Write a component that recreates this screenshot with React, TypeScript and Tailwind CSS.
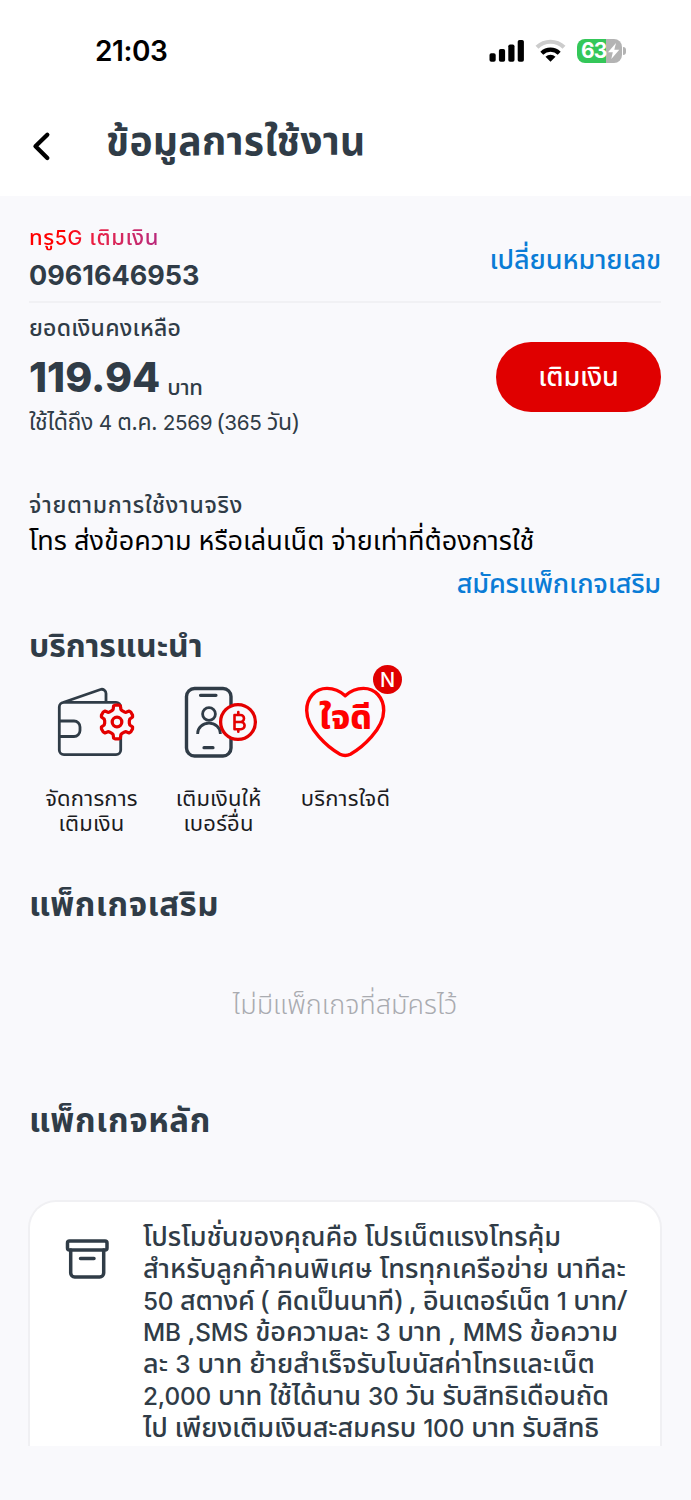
const services = [
    { id: 1, icon: <WalletIcon />, lines: ["จัดการการ", "เติมเงิน"] },
    { id: 2, icon: <TopUpIcon />, lines: ["เติมเงินให้", "เบอร์อื่น"] },
    { id: 3, icon: <HeartIcon />, lines: ["บริการใจดี"], isNew: true },
]

const promotion = [
    { text: "โปรโมชั่นของคุณคือ โปรเน็ตแรงโทรคุ้ม", tracking: "-tracking-[0.05px]" },
    { text: "สำหรับลูกค้าคนพิเศษ โทรทุกเครือข่าย นาทีละ", tracking: "tracking-[0.07px]" },
    { text: "50 สตางค์ ( คิดเป็นนาที) , อินเตอร์เน็ต 1 บาท/", tracking: "-tracking-[0.25px]" },
    { text: "MB ,SMS ข้อความละ 3 บาท , MMS ข้อความ", tracking: "-tracking-[0.1px]" },
    { text: "ละ 3 บาท ย้ายสำเร็จรับโบนัสค่าโทรและเน็ต", tracking: "tracking-[0.07px]" },
    { text: "2,000 บาท ใช้ได้นาน 30 วัน รับสิทธิเดือนถัด", tracking: "-tracking-[0.12px]" },
    { text: "ไป เพียงเติมเงินสะสมครบ 100 บาท รับสิทธิ", tracking: "-tracking-[0.1px]" },
]

// latin letters and digits sit a bit smaller than the Thai around them
function Mixed({ text }: { text: string }) {
    return (
        <>
            {text.split(/([A-Za-z0-9][A-Za-z0-9,]*)/).map((part, i) =>
                i % 2 ? <span key={i} className="font-[Inter,sans-serif] text-[0.9em]">{part}</span> : part
            )}
        </>
    )
}

// six-toothed gear around (cx, cy)
function gearPath(cx: number, cy: number) {
    const pts: string[] = []
    for (let i = 0; i < 6; i++) {
        const mid = -90 + i * 60
        for (const [offset, r] of [[-24, 12.4], [-17, 13.2], [-12, 16.4], [-6, 17], [6, 17], [12, 16.4], [17, 13.2], [24, 12.4]]) {
            const a = ((mid + offset) * Math.PI) / 180
            pts.push(`${(cx + r * Math.cos(a)).toFixed(2)} ${(cy + r * Math.sin(a)).toFixed(2)}`)
        }
    }
    return `M${pts.join("L")}Z`
}

function WalletIcon() {
    return (
        <svg width="127" height="96" viewBox="0 0 127 96" fill="none" strokeLinecap="round" strokeLinejoin="round">
            <path d="M78 38.300H36a4.700 4.700 0 0 0-4.700 4.700v43a4.700 4.700 0 0 0 4.700 4.700h52a4.700 4.700 0 0 0 4.700-4.700V43a4.700 4.700 0 0 0-4.700-4.700H78V29.500a4.200 4.200 0 0 0-5.500-4L35 38.500M31.300 57H46a6 6 0 0 1 6 6v3.500a6 6 0 0 1-6 6H31.300" stroke="#303c47" strokeWidth="2.800" />
            <path d={gearPath(89, 58)} fill="#f9f9fc" />
            <path d={gearPath(89, 58)} stroke="#e30000" strokeWidth="3.200" />
            <circle cx="89" cy="58" r="4.800" stroke="#e30000" strokeWidth="3.300" />
        </svg>
    )
}

function TopUpIcon() {
    return (
        <svg width="127" height="96" viewBox="0 0 127 96" fill="none" strokeLinecap="round">
            <rect x="31.500" y="24.500" width="44.500" height="67.500" rx="8" stroke="#303c47" strokeWidth="3.400" />
            <path d="M45.500 31.300H61M49 83.700h9" stroke="#303c47" strokeWidth="3.200" />
            <circle cx="54" cy="50" r="6.400" stroke="#303c47" strokeWidth="2.800" />
            <path d="M42.700 70v-.8a11.300 10 0 0 1 22.600 0v.8" stroke="#303c47" strokeWidth="2.800" strokeLinecap="butt" />
            <circle cx="83" cy="58" r="17.400" fill="#f9f9fc" stroke="#e30000" strokeWidth="3.300" />
            <path d="M79.500 51h6a3.400 3.400 0 0 1 0 7h-6zM79.500 58h6.500a3.500 3.500 0 0 1 0 7.200h-6.500zM83.300 48v3M83.300 65.200v2.600" stroke="#e30000" strokeWidth="2.600" strokeLinejoin="round" />
        </svg>
    )
}

function HeartIcon() {
    return (
        <svg width="127" height="96" viewBox="0 0 127 96" fill="none">
            <path d="M63.200 31.800C58 27 51.500 24.400 45 24.400C33 24.400 24.700 34 24.700 46.500C24.700 65 46.500 84 58 90.200Q63.200 92.800 68.400 90.200C79.900 84 101.700 65 101.700 46.500C101.700 34 93.400 24.400 81.400 24.400C74.900 24.400 68.400 27 63.200 31.800Z" stroke="#ff0000" strokeWidth="3.400" strokeLinejoin="round" />
        </svg>
    )
}

function StatusIcons() {
    return (
        <div className="flex items-center">
            <svg width="88" height="30" viewBox="0 0 88 30" fill="none">
                <rect x=".5" y="17.300" width="6.200" height="8.400" rx="1.800" fill="#000" />
                <rect x="9.900" y="13" width="6.200" height="12.700" rx="1.800" fill="#000" />
                <rect x="19.300" y="8.500" width="6.200" height="17.200" rx="1.800" fill="#000" />
                <rect x="28.700" y="4" width="6.200" height="21.700" rx="1.800" fill="#000" />
                <path d="M48 11.200a19.500 19.500 0 0 1 27 0" stroke="#ccc" strokeWidth="4.200" />
                <path d="M52.800 17.200a12.500 12.500 0 0 1 17.400 0" stroke="#000" strokeWidth="4.200" />
                <path d="M61.500 25.700l-5-5a7.400 7.400 0 0 1 10 0z" fill="#000" />
            </svg>
            <div className="flex h-6 w-[45px] items-center rounded-lg bg-linear-to-r from-[#34c759] from-64% to-[#b3b3b3] to-64% pl-1 text-white">
                <span className="font-[Inter,sans-serif] text-[21px] leading-6 font-bold -tracking-[0.8px]">63</span>
                <svg width="13" height="18" viewBox="0 0 13 18">
                    <path d="M9 1L1 10.300H5.800L4.300 17L12.300 7.700H7.300z" fill="currentColor" />
                </svg>
            </div>
            <div className="ml-px h-2 w-[3px] rounded-r-full bg-[#b3b3b3]" />
        </div>
    )
}

export default function App() {
    return (
        <div className="flex h-[1500px] w-[691px] flex-col overflow-hidden bg-[#f9f9fc] font-['Noto_Sans_Thai','Noto_Sans',sans-serif] whitespace-nowrap text-[#303c47]">
            <div className="flex h-[102px] shrink-0 items-center justify-between bg-white pr-[65px] pl-[95px]">
                <span className="font-[Inter,sans-serif] text-[28px] font-semibold -tracking-[0.4px] text-black">21:03</span>
                <StatusIcons />
            </div>
            <div className="flex h-[94px] shrink-0 items-start bg-white pl-[30px]">
                <svg width="24" height="32" viewBox="0 0 24 32" className="mt-7">
                    <path d="M17.300 4.800L5.500 16.300L17.300 28" fill="none" stroke="#000" strokeWidth="4.300" strokeLinecap="round" strokeLinejoin="round" />
                </svg>
                <h1 className="ml-[52px] mt-[17px] text-[39px] leading-[50px] font-bold tracking-[0.3px]">ข้อมูลการใช้งาน</h1>
            </div>

            <main className="flex h-[1250px] shrink-0 flex-col overflow-hidden pr-[30px] pl-[29px]">
                <div className="flex items-center justify-between border-b-2 border-[#f1f1f4] pt-6 pb-1">
                    <div>
                        <p className="h-[34px] text-[22px] leading-[36px] font-medium tracking-[0.6px]">
                            <span className="bg-linear-to-r from-[#ff0000] from-30% to-[#b8297c] bg-clip-text text-transparent"><Mixed text="ทรู5G เติมเงิน" /></span>
                        </p>
                        <p className="h-[43px] font-[Inter,sans-serif] text-[27px] leading-[44px] font-bold">0961646953</p>
                    </div>
                    <a className="mt-1.5 text-[27px] font-medium -tracking-[0.1px] text-[#0a7cd6]">เปลี่ยนหมายเลข</a>
                </div>

                <div className="flex items-start justify-between pt-[9px]">
                    <div>
                        <p className="h-8 text-[23px] leading-[34px] font-medium tracking-[0.25px]">ยอดเงินคงเหลือ</p>
                        <p className="flex h-[66px] items-start gap-2">
                            <span className="font-[Inter,sans-serif] text-[41px] leading-[66px] font-extrabold">119.94</span>
                            <span className="mt-3 -ml-px text-[22px] leading-[66px] font-medium -tracking-[0.3px]">บาท</span>
                        </p>
                        <p className="h-6 text-[23px] leading-[26px] -tracking-[0.35px]"><Mixed text="ใช้ได้ถึง 4 ต.ค. 2569 (365 วัน)" /></p>
                    </div>
                    <button className="mt-[30px] h-[70px] w-[165px] rounded-full bg-[#e00000] pt-0.5 text-[27px] font-medium -tracking-[0.1px] text-white">เติมเงิน</button>
                </div>

                <div className="flex flex-col pt-[56px]">
                    <p className="h-8 text-[23px] leading-[33px] font-medium tracking-[0.72px]">จ่ายตามการใช้งานจริง</p>
                    <p className="h-[42px] text-[27px] leading-10 text-black">โทร ส่งข้อความ หรือเล่นเน็ต จ่ายเท่าที่ต้องการใช้</p>
                    <a className="h-11 self-end text-[27px] leading-[42px] font-medium -tracking-[0.2px] text-[#0a7cd6]">สมัครแพ็กเกจเสริม</a>
                </div>

                <h2 className="mt-[18px] h-[42px] text-[32px] leading-[43px] font-bold -tracking-[0.1px]">บริการแนะนำ</h2>
                <div className="-ml-px -mt-1 flex">
                    {services.map((service) => (
                        <div key={service.id} className="relative w-[127px] text-center">
                            {service.icon}
                            {service.isNew && (
                                <>
                                    <span className="absolute inset-x-0 top-[35px] text-[34px] leading-10 font-extrabold text-[#ff0000]">ใจดี</span>
                                    <span className="absolute top-px left-[91px] flex size-[29px] items-center justify-center rounded-full bg-[#e00000] font-[Inter,sans-serif] text-xl font-medium text-white">N</span>
                                </>
                            )}
                            <div className="mt-[27px] text-[22px] leading-[25px] tracking-[0.2px] text-[#1c1c1f]">
                                {service.lines.map((line) => (
                                    <p key={line}>{line}</p>
                                ))}
                            </div>
                        </div>
                    ))}
                </div>

                <h2 className="mt-[48px] h-[42px] text-[33px] leading-[42px] font-bold tracking-[0.5px]">แพ็กเกจเสริม</h2>
                <p className="mt-[57px] h-[42px] text-center text-[27px] leading-[44px] font-light text-[#a9abb0]">ไม่มีแพ็กเกจที่สมัครไว้</p>
                <h2 className="mt-[74px] h-[42px] text-[33px] leading-[44px] font-bold tracking-[0.6px]">แพ็กเกจหลัก</h2>

                <div className="-mx-px mt-[58px] flex items-start rounded-t-[28px] border-2 border-b-0 border-[#f0f0f3] bg-white pt-[19px] pb-20">
                    <svg width="48" height="44" viewBox="0 0 48 44" fill="none" stroke="#303c47" strokeWidth="3.500" strokeLinejoin="round" strokeLinecap="round" className="mt-4 ml-[33px]">
                        <rect x="4.500" y="4" width="39.500" height="9" rx="2" />
                        <path d="M7.700 13v23a4 4 0 0 0 4 4h25a4 4 0 0 0 4-4V13M17.500 21.500h13.500" />
                    </svg>
                    <div className="mt-px ml-[32px] text-[27px] leading-[31.8px] font-medium">
                        {promotion.map((line) => (
                            <p key={line.text} className={`h-[31.8px] ${line.tracking}`}><Mixed text={line.text} /></p>
                        ))}
                    </div>
                </div>
            </main>
        </div>
    )
}
